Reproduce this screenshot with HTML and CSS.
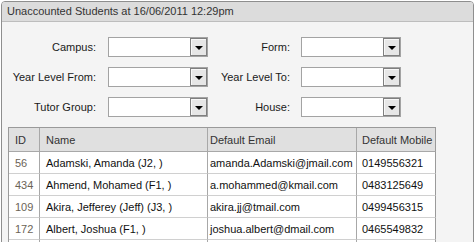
FILE: index.html
```html
<!DOCTYPE html>
<html>
<head>
<meta charset="utf-8">
<link rel="stylesheet" href="styles.css">
</head>
<body>
<div class="panel">
  <div class="panel-head">Unaccounted Students at 16/06/2011 12:29pm</div>
  <div class="panel-body">
    <div class="filters">
      <label class="lbl lbl1">Campus:</label>
      <div class="combo"><span class="btn"><span class="tri"></span></span></div>
      <label class="lbl lbl2">Form:</label>
      <div class="combo"><span class="btn"><span class="tri"></span></span></div>
      <label class="lbl lbl1">Year Level From:</label>
      <div class="combo"><span class="btn"><span class="tri"></span></span></div>
      <label class="lbl lbl2">Year Level To:</label>
      <div class="combo"><span class="btn"><span class="tri"></span></span></div>
      <label class="lbl lbl1">Tutor Group:</label>
      <div class="combo"><span class="btn"><span class="tri"></span></span></div>
      <label class="lbl lbl2">House:</label>
      <div class="combo"><span class="btn"><span class="tri"></span></span></div>
    </div>
    <div class="grid" role="table">
      <div class="cell th p-id" role="columnheader">ID</div>
      <div class="cell th p-name" role="columnheader">Name</div>
      <div class="cell th p-email" role="columnheader">Default Email</div>
      <div class="cell th p-mob" role="columnheader">Default Mobile</div>

      <div class="cell p-id id">56</div>
      <div class="cell p-name">Adamski, Amanda (J2, )</div>
      <div class="cell p-email">amanda.Adamski@jmail.com</div>
      <div class="cell p-mob">0149556321</div>

      <div class="cell p-id id">434</div>
      <div class="cell p-name">Ahmend, Mohamed (F1, )</div>
      <div class="cell p-email">a.mohammed@kmail.com</div>
      <div class="cell p-mob">0483125649</div>

      <div class="cell p-id id">109</div>
      <div class="cell p-name">Akira, Jefferey (Jeff) (J3, )</div>
      <div class="cell p-email">akira.jj@tmail.com</div>
      <div class="cell p-mob">0499456315</div>

      <div class="cell p-id id">172</div>
      <div class="cell p-name">Albert, Joshua (F1, )</div>
      <div class="cell p-email">joshua.albert@dmail.com</div>
      <div class="cell p-mob">0465549832</div>

      <div class="cell p-id id"></div>
      <div class="cell p-name"></div>
      <div class="cell p-email"></div>
      <div class="cell p-mob"></div>
    </div>
  </div>
</div>
</body>
</html>
```
FILE: styles.css
```css
html, body {
  margin: 0;
  padding: 0;
  background: #ffffff;
}
body {
  font-family: "Liberation Sans", Arial, sans-serif;
  font-size: 11px;
  color: #1a1a1a;
}
.panel {
  margin: 1px 0 0 1px;
  width: 473px;
  height: 260px;
  box-sizing: border-box;
  border: 1px solid #8e8e8e;
  border-radius: 4px 4px 0 0;
  background: #f4f4f4;
  overflow: hidden;
}
.panel-head {
  height: 19px;
  line-height: 19px;
  padding-left: 5px;
  background: #dcdcdc;
  border-bottom: 1px solid #bdbdbd;
  color: #333333;
}
.panel-body {
  padding-top: 15px;
}
.filters {
  display: grid;
  grid-template-columns: 106px 100px 93px 100px;
  grid-auto-rows: 20px;
  row-gap: 10px;
}
.lbl {
  display: flex;
  align-items: center;
  justify-content: flex-end;
  color: #1a1a1a;
}
.lbl1 { padding-right: 12px; }
.lbl2 { padding-right: 11px; }
.combo {
  box-sizing: border-box;
  height: 20px;
  border: 1px solid #a3a3a3;
  background: #ffffff;
  display: flex;
  justify-content: flex-end;
}
.btn {
  box-sizing: border-box;
  width: 17px;
  height: 18px;
  border: 1px solid #7f7f7f;
  background: #e6e6e6;
  box-shadow: inset 1px 1px 0 #f8f8f8;
  display: flex;
  align-items: center;
  justify-content: center;
}
.tri {
  width: 0;
  height: 0;
  border-left: 4px solid transparent;
  border-right: 4px solid transparent;
  border-top: 4px solid #000000;
  margin-top: 2px;
}
.grid {
  margin: 10px 0 0 6px;
  width: 428px;
  box-sizing: border-box;
  display: grid;
  grid-template-columns: 31px 168px 149px 79px;
  grid-template-rows: 24px;
  grid-auto-rows: 22px;
  border-left: 1px solid #9a9a9a;
  border-top: 1px solid #9a9a9a;
}
.cell {
  box-sizing: border-box;
  border-right: 1px solid #a8a8a8;
  border-bottom: 1px solid #d0d0d0;
  background: #ffffff;
  color: #111111;
  display: flex;
  align-items: center;
  white-space: nowrap;
  overflow: hidden;
}
.cell.th {
  background: #e0e0e0;
  color: #333333;
  border-bottom-color: #a8a8a8;
}
.p-id { padding-left: 6px; }
.p-name { padding-left: 6px; }
.p-email { padding-left: 2px; }
.p-mob { padding-left: 5px; }
.p-mob { border-right-color: #9a9a9a; }
.id { color: #6b6357; }
```
